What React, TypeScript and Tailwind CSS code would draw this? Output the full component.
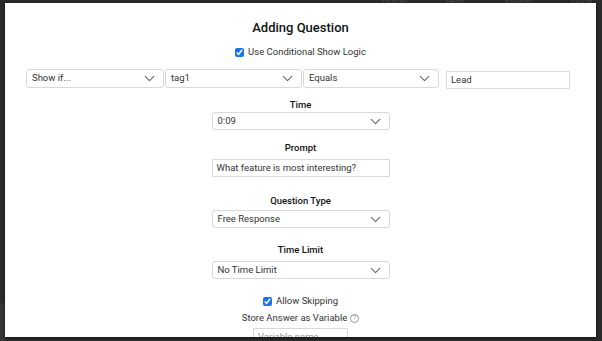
import { ChevronDown } from 'lucide-react';

const font = { fontFamily: 'Roboto, "Liberation Sans", sans-serif' };

function Select({ value, className = '' }: { value: string; className?: string }) {
  return (
    <div
      className={`flex items-center justify-between bg-white border border-[#d9d9d9] rounded-[3px] pl-[5px] pr-[5px] text-[9.5px] text-[#333] ${className}`}
    >
      <span>{value}</span>
      <ChevronDown size={17} strokeWidth={1.5} className="text-[#666]" />
    </div>
  );
}

function TextBox({ value, placeholder, className = '' }: { value?: string; placeholder?: string; className?: string }) {
  return (
    <div
      className={`flex items-center bg-white border border-[#d9d9d9] rounded-[1px] px-[4px] text-[9.5px] ${value ? 'text-[#333]' : 'text-[#999]'} ${className}`}
    >
      {value ?? placeholder}
    </div>
  );
}

function Label({ text, className = '' }: { text: string; className?: string }) {
  return <div className={`text-center text-[9.5px] leading-[14px] font-medium text-[#111] ${className}`}>{text}</div>;
}

export default function App() {
  return (
    <div className="relative w-[602px] h-[341px] overflow-hidden bg-[#2b2b2b]" style={font}>
      {/* page behind the overlay */}
      <div className="absolute top-[-5px] right-[10px] flex gap-[40px] text-[9px] text-[#4a4a4a]">
        <span>Home</span>
        <span>New</span>
        <span>Videos</span>
        <span>Copy</span>
      </div>
      <div className="absolute left-0 top-[303px] w-[5px] h-[38px] bg-[#353535]" />

      <div className="relative ml-[5px] mt-[3px] w-[591px] h-[334px] bg-white overflow-hidden shadow-[0_1px_3px_rgba(0,0,0,0.6)]">
        <div className="pt-[15px] text-center text-[13px] leading-[20px] font-medium text-[#111]">Adding Question</div>

        <label className="mt-[7px] flex items-center justify-center gap-[4px] text-[9.5px] leading-[14px] text-[#333]">
          <input type="checkbox" defaultChecked className="w-[9px] h-[9px] m-0 accent-[#1a73e8]" />
          Use Conditional Show Logic
        </label>

        <div className="mt-[10px] ml-[21px] flex items-start">
          <Select value="Show if..." className="w-[138px] h-[19px]" />
          <Select value="tag1" className="w-[137px] h-[19px] ml-[1px]" />
          <Select value="Equals" className="w-[136px] h-[19px] ml-[1px]" />
          <TextBox value="Lead" className="w-[124px] h-[18px] ml-[7px] mt-[2px]" />
        </div>

        <Label text="Time" className="mt-[9px]" />
        <Select value="0:09" className="mx-auto w-[178px] h-[18px]" />

        <Label text="Prompt" className="mt-[11px]" />
        <TextBox value="What feature is most interesting?" className="mx-auto mt-[4px] w-[178px] h-[18px]" />

        <Label text="Question Type" className="mt-[17px]" />
        <Select value="Free Response" className="mx-auto mt-[2px] w-[178px] h-[18px]" />

        <Label text="Time Limit" className="mt-[15px]" />
        <Select value="No Time Limit" className="mx-auto mt-[4px] w-[178px] h-[18px]" />

        <label className="mt-[15px] flex items-center justify-center gap-[4px] text-[9.5px] leading-[14px] text-[#333]">
          <input type="checkbox" defaultChecked className="w-[9px] h-[9px] m-0 accent-[#1a73e8]" />
          Allow Skipping
        </label>

        <div className="mt-[3px] flex items-center justify-center gap-[3px] text-[9.5px] leading-[14px] text-[#333]">
          Store Answer as Variable
          <span className="flex items-center justify-center w-[9px] h-[9px] rounded-full border border-[#999] text-[7px] leading-none text-[#999]">
            ?
          </span>
        </div>

        <TextBox placeholder="Variable name" className="mx-auto mt-[3px] w-[95px] h-[18px]" />
      </div>
    </div>
  );
}
